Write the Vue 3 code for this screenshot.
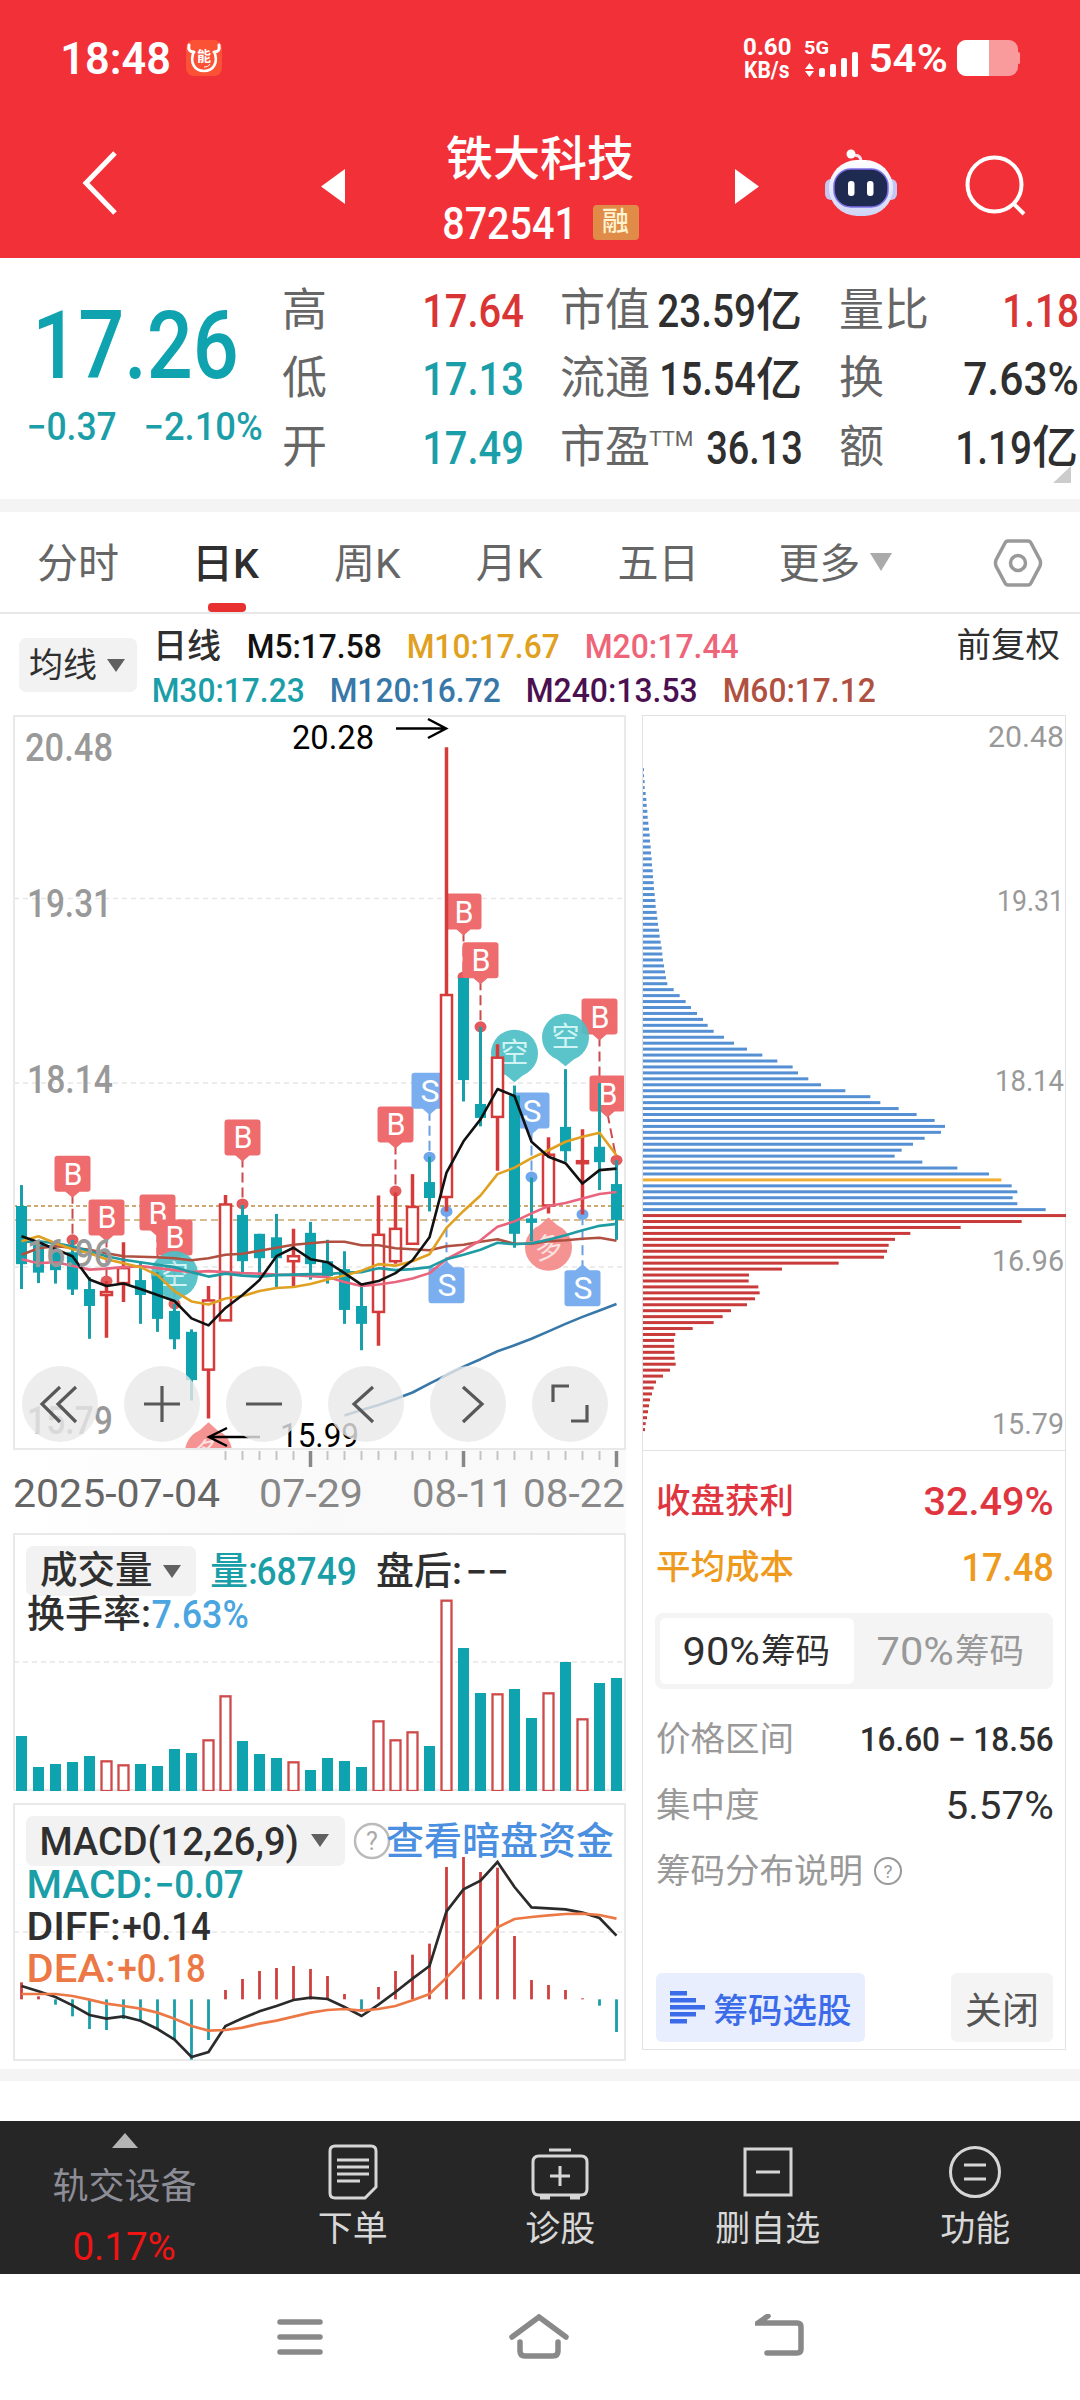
<template>
    <div class="page">
        <header class="top">
            <div class="status">
                <Num class="clock" t="18:48" :w="108" :s="44" />
                <svg class="app-badge" width="36" height="36" viewBox="0 0 36 36">
                    <rect width="36" height="36" rx="8" fill="#fb5236" />
                    <path d="M3 5c-1 5 1 7 5 7M33 5c1 5-1 7-5 7" fill="none" stroke="#fff" stroke-width="3" stroke-linecap="round" />
                    <path d="M8 11c-5 12 1 20 10 20s15-8 10-20" fill="none" stroke="#fff" stroke-width="2.6" />
                    <path d="M18 27c3 0 5-1 6-3" fill="none" stroke="#fff" stroke-width="1" />
                    <text x="18" y="21" text-anchor="middle" font-size="14" font-weight="700" fill="#fff">能</text>
                </svg>
                <div class="speed">
                    <Num t="0.60" :w="47" :s="23" />
                    <Num t="KB/s" :w="44" :s="23" />
                </div>
                <svg class="signal" width="56" height="38" viewBox="804 41 56 38" fill="#fff">
                    <text x="804" y="55" font-size="18" font-weight="700" textLength="25" lengthAdjust="spacingAndGlyphs">5G</text>
                    <path d="M805 70l4.500-6 4.500 6zM805 72l4.500 6 4.500-6z" />
                    <rect x="819" y="69" width="6" height="9" rx="2" />
                    <rect x="830" y="65" width="6" height="13" rx="2" />
                    <rect x="841" y="59" width="6" height="19" rx="2" />
                    <rect x="852" y="53" width="6" height="25" rx="2" />
                </svg>
                <Num class="power" t="54%" :w="77" :s="39" />
                <svg class="battery" width="64" height="36" viewBox="0 0 64 36">
                    <rect width="61" height="36" rx="9" fill="#f99a9d" />
                    <rect x="60" y="12" width="3" height="12" rx="1.500" fill="#f99a9d" />
                    <path d="M9 0H32V36H9a9 9 0 0 1-9-9V9a9 9 0 0 1 9-9z" fill="#fff" />
                </svg>
            </div>
            <div class="nav">
                <svg class="back" width="36" height="66" viewBox="0 0 36 66">
                    <path d="M33 3L4 33L33 63" fill="none" stroke="#fff" stroke-width="5" />
                </svg>
                <svg class="prev" width="24" height="35" viewBox="0 0 24 35"><path d="M24 0V35L0 17.500z" fill="#fff" /></svg>
                <div class="title">
                    <h1>铁大科技</h1>
                    <div class="code">
                        <Num t="872541" :w="132" :s="45" />
                        <span class="rong">融</span>
                    </div>
                </div>
                <svg class="next" width="24" height="35" viewBox="0 0 24 35"><path d="M0 0V35L24 17.500z" fill="#fff" /></svg>
                <svg class="robot" width="74" height="70" viewBox="824 149 74 70">
                    <defs>
                        <linearGradient id="shell" x1="0" y1="0" x2="0" y2="1">
                            <stop offset="0" stop-color="#fff" />
                            <stop offset="1" stop-color="#cfd4f7" />
                        </linearGradient>
                    </defs>
                    <path d="M861 162c0-6-3-7-9-7" fill="none" stroke="#f3dfee" stroke-width="3" />
                    <circle cx="851" cy="154" r="4.500" fill="#fff" />
                    <rect x="825" y="179" width="12" height="21" rx="6" fill="#c6c6f2" />
                    <rect x="885" y="179" width="12" height="21" rx="6" fill="#c6c6f2" />
                    <rect x="829" y="160" width="64" height="56" rx="28" fill="url(#shell)" />
                    <rect x="834" y="169" width="54" height="38" rx="17" fill="#1f2a50" stroke="#7d6fe8" stroke-width="1.500" />
                    <rect x="848" y="181" width="6.500" height="15" rx="3" fill="#fff" />
                    <rect x="867" y="181" width="6.500" height="15" rx="3" fill="#fff" />
                </svg>
                <svg class="search" width="62" height="62" viewBox="964 155 62 62" fill="none" stroke="#fff" stroke-width="4">
                    <circle cx="994.500" cy="184.500" r="27" />
                    <path d="M1014 204L1024 214" />
                </svg>
            </div>
        </header>

        <section class="quote">
            <div class="last">
                <Num class="price" t="17.26" :w="201" :s="94" />
                <div class="change">
                    <Num t="−0.37" :w="88" :s="38" />
                    <Num t="−2.10%" :w="117" :s="38" />
                </div>
            </div>
            <div class="facts">
                <div v-for="(f, i) in facts" :key="i" class="fact">
                    <span class="label">{{ f.label }}<sup v-if="f.sup"><Num :t="f.sup" :w="43" :s="21" /></sup></span>
                    <span class="value" :class="f.tone"><Num :t="f.value" :w="f.w" :s="46" /><b v-if="f.unit">{{ f.unit }}</b></span>
                </div>
            </div>
            <i class="corner"></i>
        </section>

        <nav class="tabs">
            <span>分时</span>
            <span class="on">日K</span>
            <span>周K</span>
            <span>月K</span>
            <span>五日</span>
            <span class="more">更多<i class="caret light"></i></span>
            <svg class="setting" width="50" height="48" viewBox="0 0 50 48" fill="none" stroke="#999" stroke-width="3.500">
                <path d="M15 2H35Q37 2 38 4L47 21Q48 24 47 27L38 44Q37 46 35 46H15Q13 46 12 44L3 27Q2 24 3 21L12 4Q13 2 15 2z" />
                <circle cx="25" cy="24" r="7.500" />
            </svg>
        </nav>

        <section class="ma">
            <div class="select ma-btn">均线<i class="caret"></i></div>
            <div class="ma-list">
                <div class="ma-row">
                    <b>日线</b>
                    <Num v-for="m in maTop" :key="m.t" :t="m.t" :w="m.w" :s="34" :style="{ color: m.c }" />
                </div>
                <div class="ma-row">
                    <Num v-for="m in maBottom" :key="m.t" :t="m.t" :w="m.w" :s="34" :style="{ color: m.c }" />
                </div>
            </div>
            <span class="adjust">前复权</span>
        </section>

        <main class="charts">
            <div class="left">
                <div class="kline">
                    <svg width="613" height="735" viewBox="13 715 613 735">
                        <g class="grid">
                            <path v-for="g in [898.5, 1083, 1267]" :key="g" :d="`M14 ${g}H625`" />
                        </g>
                        <g fill="none" stroke="#c08a45" stroke-width="1.500" stroke-dasharray="4 3">
                            <path d="M13 1206H625" />
                            <path d="M13 1220H625" stroke="#c9a66b" stroke-dasharray="7 4" />
                        </g>

                        <!-- trade flags and long/short balloons -->
                        <g v-for="(f, i) in flags" :key="'f' + i">
                            <path :d="`M${f.x} ${f.below ? y(f.top) : y(f.top) + 38}L${cx(f.i)} ${y(f.dot)}`" :stroke="flagColor[f.t].line" stroke-width="2" stroke-dasharray="10 5" />
                            <ellipse :cx="cx(f.i)" :cy="y(f.dot)" rx="6" ry="5.500" :fill="flagColor[f.t].dot" />
                            <path :d="f.below ? flagUp(f.x, y(f.top)) : flagDown(f.x, y(f.top))" :fill="flagColor[f.t].box" />
                            <text :x="f.x - 9" :y="y(f.top) + 29" font-size="31" font-weight="400" textLength="19" lengthAdjust="spacingAndGlyphs" fill="#fff">{{ f.t }}</text>
                        </g>
                        <g v-for="(b, i) in balloons" :key="'b' + i" opacity=".92">
                            <circle :cx="cx(b.i)" :cy="y(b.y)" r="23.500" :fill="b.c" />
                            <path :d="b.up ? `M${cx(b.i) - 11} ${y(b.y) - 20}L${cx(b.i)} ${y(b.y) - 30}L${cx(b.i) + 11} ${y(b.y) - 20}z` : `M${cx(b.i) - 11} ${y(b.y) + 20}L${cx(b.i)} ${y(b.y) + 29}L${cx(b.i) + 11} ${y(b.y) + 20}z`" :fill="b.c" />
                            <text :x="cx(b.i)" :y="y(b.y) + 10" text-anchor="middle" font-size="28" font-weight="400" :fill="b.up ? '#fde0e0' : '#cdf3f3'" :transform="b.up ? `rotate(-12 ${cx(b.i)} ${y(b.y)})` : null">{{ b.t }}</text>
                        </g>

                        <g v-for="(k, i) in candles" :key="'k' + i">
                            <template v-if="k[0]">
                                <path :d="`M${cx(i)} ${y(k[1])}V${y(k[2])}M${cx(i)} ${y(k[3])}V${y(k[4])}`" stroke="#d63b3b" stroke-width="3.500" />
                                <rect :x="cx(i) - 5.5" :y="y(k[2])" width="11" :height="Math.max(2, y(k[3]) - y(k[2]))" fill="#fff" stroke="#d63b3b" stroke-width="2.500" />
                            </template>
                            <template v-else>
                                <path :d="`M${cx(i)} ${y(k[1])}V${y(k[4])}`" stroke="#1a9ea8" stroke-width="3" />
                                <rect :x="cx(i) - 5.5" :y="y(k[2])" width="11" :height="y(k[3]) - y(k[2])" fill="#0ea3af" />
                            </template>
                        </g>

                        <polyline v-for="l in lines" :key="l.c" :points="trace(l.v, y, l.from)" fill="none" :stroke="l.c" stroke-width="2.600" stroke-linejoin="round" />

                        <g class="axis">
                            <text x="25" y="760.500" textLength="88" lengthAdjust="spacingAndGlyphs">20.48</text>
                            <text x="27" y="917" textLength="85" lengthAdjust="spacingAndGlyphs">19.31</text>
                            <text x="27" y="1092.500" textLength="86" lengthAdjust="spacingAndGlyphs">18.14</text>
                            <text x="27" y="1267" textLength="86" lengthAdjust="spacingAndGlyphs">16.96</text>
                            <text x="27" y="1434" textLength="86" lengthAdjust="spacingAndGlyphs">15.79</text>
                        </g>
                        <g font-size="34" font-weight="400" fill="#000">
                            <text x="292" y="748.500" textLength="82" lengthAdjust="spacingAndGlyphs">20.28</text>
                            <text x="280" y="1447" textLength="79" lengthAdjust="spacingAndGlyphs">15.99</text>
                        </g>
                        <path d="M396 728.500H446M428 719L446 728.500L428 738M260 1437H209M227 1428L209 1437L227 1446" fill="none" stroke="#000" stroke-width="2.500" />
                        <rect x="14" y="716" width="611" height="733" fill="none" stroke="#e9e9e9" stroke-width="2" />
                    </svg>
                    <div class="tools">
                        <svg v-for="d in tools" :key="d" viewBox="0 0 76 76">
                            <path :d="d" fill="none" stroke="#585858" stroke-width="3.200" />
                        </svg>
                    </div>
                </div>

                <svg class="dates" width="613" height="83" viewBox="13 1450 613 83">
                    <path v-for="i in 24" :key="i" :d="`M${cx(i + 11)} 1451V${tickEnd(i + 11)}`" :stroke="tickEnd(i + 11) > 1461 ? '#888' : '#c4c4c4'" :stroke-width="tickEnd(i + 11) > 1461 ? 3.5 : 2" />
                    <g font-size="38" font-weight="400">
                        <text x="13" y="1507" fill="#666" textLength="207" lengthAdjust="spacingAndGlyphs">2025-07-04</text>
                        <text x="259" y="1507" fill="#888" textLength="104" lengthAdjust="spacingAndGlyphs">07-29</text>
                        <text x="412" y="1507" fill="#888" textLength="101" lengthAdjust="spacingAndGlyphs">08-11</text>
                        <text x="523" y="1507" fill="#888" textLength="102" lengthAdjust="spacingAndGlyphs">08-22</text>
                    </g>
                </svg>

                <div class="sub volume">
                    <svg width="613" height="258" viewBox="13 1533 613 258">
                        <rect x="14" y="1534" width="611" height="256" fill="none" stroke="#e9e9e9" stroke-width="2" />
                        <path class="dash" d="M14 1662H625" />
                        <template v-for="(v, i) in volumes" :key="i">
                            <rect v-if="candles[i][0]" :x="cx(i) - 5" :y="vy(v) + 1" width="10" :height="vy(1053) - vy(v) - 1" fill="#fff" stroke="#cf4a4a" stroke-width="2.300" />
                            <rect v-else :x="cx(i) - 5.5" :y="vy(v)" width="11" :height="vy(1053) - vy(v)" fill="#0ea3af" />
                        </template>
                    </svg>
                    <div class="legend">
                        <div class="legend-row">
                            <div class="select vol-btn">成交量<i class="caret"></i></div>
                            <span class="teal">量:</span><Num class="teal" t="68749" :w="98" :s="38" />
                            <span class="after">盘后:</span><Num class="dashes" t="−−" :w="41" :s="38" />
                        </div>
                        <div class="legend-row turnover"><span>换手率:</span><Num class="sky" t="7.63%" :w="95" :s="38" /></div>
                    </div>
                </div>

                <div class="sub macd">
                    <svg width="613" height="258" viewBox="13 1803 613 258">
                        <rect x="14" y="1804" width="611" height="256" fill="none" stroke="#e9e9e9" stroke-width="2" />
                        <path class="dash" d="M14 1932H625" />
                        <path v-for="(v, i) in macdBars" :key="i" :d="`M${cx(i)} ${my(628)}V${my(v)}`" :stroke="v < 628 ? '#cf3f3f' : '#1a9ea8'" stroke-width="2.800" />
                        <polyline :points="trace(diff, my)" fill="none" stroke="#2b2b2b" stroke-width="2.700" />
                        <polyline :points="trace(dea, my)" fill="none" stroke="#ec7846" stroke-width="2.700" />
                    </svg>
                    <div class="legend">
                        <div class="legend-row macd-head">
                            <div class="select macd-btn"><Num t="MACD(12,26,9)" :w="257" :s="39" /><i class="caret"></i></div>
                            <svg class="help" width="38" height="38" viewBox="0 0 38 38">
                                <circle cx="19" cy="19" r="17" fill="none" stroke="#bbb" stroke-width="2.500" />
                                <text x="19" y="28" text-anchor="middle" font-size="25" font-weight="400" fill="#aaa">?</text>
                            </svg>
                            <a>查看暗盘资金</a>
                        </div>
                        <div class="metric teal"><Num t="MACD:" :w="124" :s="39" /><Num t="−0.07" :w="87" :s="38" /></div>
                        <div class="metric"><Num t="DIFF:" :w="92" :s="39" /><Num t="+0.14" :w="86" :s="38" /></div>
                        <div class="metric orange"><Num t="DEA:" :w="87" :s="39" /><Num t="+0.18" :w="86" :s="38" /></div>
                    </div>
                </div>
            </div>

            <aside class="chips">
                <svg width="423" height="734" viewBox="643 716 423 734">
                    <rect v-for="(c, i) in chips" :key="i" x="643" :y="768.2 + i * 5.945" :width="(c - 69) / 3" height="3" :fill="i === 69 ? '#f0ae35' : i > 74 ? '#c93b3b' : '#5590d4'" />
                    <g font-size="30" fill="#999" font-weight="400">
                        <text x="988" y="747" textLength="76" lengthAdjust="spacingAndGlyphs">20.48</text>
                        <text x="997" y="910.500" textLength="67" lengthAdjust="spacingAndGlyphs">19.31</text>
                        <text x="995" y="1090.500" textLength="69" lengthAdjust="spacingAndGlyphs">18.14</text>
                        <text x="992" y="1271" textLength="72" lengthAdjust="spacingAndGlyphs">16.96</text>
                        <text x="992" y="1434" textLength="72" lengthAdjust="spacingAndGlyphs">15.79</text>
                    </g>
                </svg>
                <div class="stats">
                    <div class="stat red"><span>收盘获利</span><Num t="32.49%" :w="128" :s="38" /></div>
                    <div class="stat gold"><span>平均成本</span><Num t="17.48" :w="90" :s="38" /></div>
                    <div class="segment">
                        <span class="active"><Num t="90%" :w="75" :s="38" />筹码</span>
                        <span><Num t="70%" :w="75" :s="38" />筹码</span>
                    </div>
                    <div class="stat range"><span>价格区间</span><Num t="16.60 − 18.56" :w="192" :s="34" /></div>
                    <div class="stat"><span>集中度</span><Num t="5.57%" :w="106" :s="38" /></div>
                    <div class="stat note">
                        <span>筹码分布说明</span>
                        <svg width="30" height="30" viewBox="0 0 30 30">
                            <circle cx="15" cy="15" r="13" fill="none" stroke="#999" stroke-width="2" />
                            <text x="15" y="22" text-anchor="middle" font-size="19" fill="#999">?</text>
                        </svg>
                    </div>
                    <div class="actions">
                        <button class="pick">
                            <svg width="35" height="33" viewBox="0 0 35 33" fill="#3b6be8">
                                <path d="M0 0H17V4.500H0zM0 7H26V11.500H0zM0 14H35V18.500H0zM0 21H26V25.500H0zM0 28H17V32.500H0z" />
                            </svg>
                            筹码选股
                        </button>
                        <button class="close">关闭</button>
                    </div>
                </div>
            </aside>
        </main>

        <div class="divider"></div>

        <footer class="bar">
            <div class="sector">
                <i class="up"></i>
                <span>轨交设备</span>
                <Num t="0.17%" :w="101" :s="39" />
            </div>
            <div v-for="a in actions" :key="a.name" class="action">
                <svg width="60" height="58" viewBox="-30 -29 60 58" fill="none" stroke="#d6d6d6" stroke-width="3">
                    <path :d="a.d" />
                </svg>
                <span>{{ a.name }}</span>
            </div>
        </footer>

        <div class="system">
            <svg width="46" height="46" viewBox="0 0 46 46"><path d="M3 8H43M3 23H43M3 38H43" /></svg>
            <svg width="60" height="46" viewBox="0 0 60 46"><path d="M3 23L30 3L57 23M11 28V37Q11 42 16 42H44Q49 42 49 37V28" /></svg>
            <svg width="50" height="46" viewBox="0 0 50 46"><path d="M13 2L3 9H42Q46 9 46 13V35Q46 39 42 39H12" /></svg>
        </div>
    </div>
</template>

<script setup>
import { h } from 'vue';

// condensed figures: the text is fitted to a fixed width, box height equals cap height
const Num = (props) => h('svg', {
    width: props.w,
    height: Math.round(props.s * 0.711),
    style: { overflow: 'visible', flex: 'none', display: 'block' },
    fill: 'currentColor',
}, [
    h('text', {
        x: -props.s * 0.04,
        y: Math.round(props.s * 0.711),
        'font-size': props.s,
        textLength: props.w + props.s * 0.06,
        lengthAdjust: 'spacingAndGlyphs',
    }, props.t),
]);
Num.props = ['t', 'w', 's'];

const facts = [
    { label: '高', value: '17.64', w: 99, tone: 'red' },
    { label: '市值', value: '23.59', w: 96, unit: '亿' },
    { label: '量比', value: '1.18', w: 74, tone: 'red' },
    { label: '低', value: '17.13', w: 99, tone: 'teal' },
    { label: '流通', value: '15.54', w: 94, unit: '亿' },
    { label: '换', value: '7.63%', w: 113 },
    { label: '开', value: '17.49', w: 99, tone: 'teal' },
    { label: '市盈', sup: 'TTM', value: '36.13', w: 94 },
    { label: '额', value: '1.19', w: 74, unit: '亿' },
];

const maTop = [
    { t: 'M5:17.58', w: 133, c: '#111' },
    { t: 'M10:17.67', w: 151, c: '#e0a020' },
    { t: 'M20:17.44', w: 152, c: '#ee6478' },
];
const maBottom = [
    { t: 'M30:17.23', w: 151, c: '#1a9ea8' },
    { t: 'M120:16.72', w: 169, c: '#3878a8' },
    { t: 'M240:13.53', w: 170, c: '#4a1050' },
    { t: 'M60:17.12', w: 151, c: '#b05040' },
];

// [rising, high, body top, body bottom, low]
const candles = [
    [0, 975, 1017, 1134, 1184], [0, 1090, 1095, 1151, 1172], [0, 1100, 1108, 1146, 1173], [0, 1085, 1110, 1185, 1196],
    [0, 1160, 1184, 1218, 1284], [1, 1168, 1190, 1196, 1282], [1, 1090, 1142, 1172, 1210], [0, 1130, 1166, 1196, 1254],
    [0, 1150, 1158, 1244, 1270], [0, 1214, 1228, 1285, 1305], [0, 1265, 1270, 1367, 1408], [1, 1178, 1207, 1346, 1444],
    [1, 995, 1014, 1247, 1247], [0, 1015, 1035, 1128, 1152], [0, 1073, 1073, 1122, 1160], [0, 1033, 1080, 1122, 1180],
    [1, 1063, 1118, 1128, 1178], [0, 1049, 1071, 1134, 1165], [0, 1085, 1128, 1158, 1173], [0, 1108, 1144, 1226, 1254],
    [0, 1172, 1218, 1254, 1307], [1, 996, 1075, 1230, 1298], [1, 990, 1063, 1128, 1133], [1, 953, 1019, 1093, 1093],
    [0, 918, 969, 1001, 1028], [1, 95, 593, 999, 1028], [0, 559, 559, 764, 807], [0, 657, 812, 840, 857],
    [1, 692, 719, 838, 946], [0, 775, 795, 1073, 1101], [0, 960, 1042, 1051, 1088], [1, 879, 914, 1016, 1032],
    [0, 742, 858, 907, 928], [1, 863, 927, 931, 1034], [0, 770, 898, 929, 985], [0, 925, 973, 1045, 1085],
];

const lines = [
    { c: '#b05040', v: [1115, 1102, 1098, 1101, 1105, 1112, 1118, 1119, 1120, 1122, 1126, 1122, 1115, 1113, 1107, 1101, 1095, 1092, 1089, 1089, 1096, 1096, 1102, 1104, 1106, 1098, 1095, 1089, 1084, 1093, 1093, 1088, 1086, 1083, 1081, 1087] },
    { c: '#e8657d', v: [1124, 1132, 1130, 1137, 1145, 1143, 1140, 1138, 1142, 1146, 1150, 1148, 1150, 1152, 1153, 1155, 1156, 1158, 1160, 1170, 1178, 1175, 1170, 1163, 1152, 1124, 1106, 1086, 1059, 1048, 1032, 1017, 1011, 1002, 993, 989] },
    { c: '#1f9ba3', v: [1090, 1088, 1092, 1098, 1108, 1118, 1125, 1130, 1135, 1140, 1150, 1159, 1153, 1157, 1159, 1156, 1155, 1154, 1154, 1151, 1150, 1142, 1146, 1144, 1140, 1124, 1115, 1105, 1091, 1094, 1092, 1085, 1076, 1066, 1057, 1053] },
    { c: '#3878a8', from: 19, v: [1438, 1427, 1417, 1405, 1392, 1374, 1357, 1340, 1325, 1309, 1297, 1284, 1269, 1254, 1240, 1227, 1214] },
    { c: '#e0a020', v: [1088, 1078, 1092, 1104, 1112, 1124, 1132, 1140, 1156, 1188, 1209, 1215, 1203, 1198, 1188, 1182, 1180, 1174, 1165, 1157, 1147, 1134, 1137, 1128, 1114, 1061, 1027, 996, 953, 940, 921, 905, 888, 878, 870, 915] },
    { c: '#111', v: [1078, 1090, 1104, 1118, 1165, 1178, 1173, 1184, 1196, 1208, 1243, 1257, 1222, 1196, 1166, 1118, 1101, 1124, 1130, 1152, 1175, 1168, 1152, 1126, 1080, 950, 887, 843, 782, 796, 888, 918, 931, 972, 945, 942] },
];

const cx = (i) => 21.5 + i * 17;
const y = (v) => 700 + v * 0.4975;
const vy = (v) => 1440 + v / 3;
const my = (v) => 1790 + v / 3;
const trace = (values, scale, from = 0) => values.map((v, i) => `${cx(i + from)},${scale(v)}`).join(' ');
const tickEnd = (i) => ((i - 17) % 9 === 0 ? 1467 : 1460);

const flagColor = {
    B: { box: '#ee6c6e', dot: '#e25a5c', line: '#cc4a4c' },
    S: { box: '#7aaeee', dot: '#6fa6ec', line: '#6b9fe0' },
};
const flags = [
    { t: 'B', i: 3, x: 72.5, top: 916, dot: 1085 },
    { t: 'B', i: 5, x: 106.5, top: 1004, dot: 1168 },
    { t: 'B', i: 8, x: 157.5, top: 994, dot: 1160 },
    { t: 'B', i: 9, x: 174.5, top: 1044, dot: 1214 },
    { t: 'B', i: 13, x: 242.5, top: 843, dot: 1013 },
    { t: 'B', i: 22, x: 395.5, top: 817, dot: 987 },
    { t: 'S', i: 24, x: 429.5, top: 749, dot: 919 },
    { t: 'S', i: 25, x: 446.5, top: 1140, dot: 1028, below: true },
    { t: 'B', i: 26, x: 463.5, top: 389, dot: 557 },
    { t: 'B', i: 27, x: 480.5, top: 487, dot: 657 },
    { t: 'S', i: 30, x: 531.5, top: 789, dot: 959 },
    { t: 'S', i: 33, x: 582.5, top: 1146, dot: 1034, below: true },
    { t: 'B', i: 34, x: 599.5, top: 600, dot: 770 },
    { t: 'B', i: 35, x: 607.5, top: 755, dot: 925 },
];
const flagBox = (x, t) => `M${x - 15} ${t}H${x + 15}Q${x + 18} ${t} ${x + 18} ${t + 3}V${t + 33}Q${x + 18} ${t + 36} ${x + 15} ${t + 36}H${x - 15}Q${x - 18} ${t + 36} ${x - 18} ${t + 33}V${t + 3}Q${x - 18} ${t} ${x - 15} ${t}z`;
const flagDown = (x, t) => `${flagBox(x, t)}M${x - 7} ${t + 36}H${x + 7}L${x} ${t + 42}z`;
const flagUp = (x, t) => `${flagBox(x, t)}M${x - 7} ${t}H${x + 7}L${x} ${t - 6}z`;

const balloons = [
    { t: '空', i: 9, y: 1155, c: '#4ec0c6' },
    { t: '多', i: 11, y: 1512, c: '#f58a8a', up: true },
    { t: '空', i: 29, y: 710, c: '#4ec0c6' },
    { t: '多', i: 31, y: 1100, c: '#f58a8a', up: true },
    { t: '空', i: 32, y: 678, c: '#4ec0c6' },
];

const tools = [
    'M38 21L20 38L38 56M54 21L36 38L54 56',
    'M20 38H56M38 20V56',
    'M20 38H56',
    'M45 21L26 38L45 56',
    'M33 21L52 38L33 56',
    'M21 36V20H37M39 55H55V39',
];

const volumes = [
    888, 981, 972, 966, 948, 961, 973, 972, 978, 927, 939, 898, 766, 903, 942, 954, 964, 990,
    954, 963, 981, 841, 898, 874, 918, 479, 624, 759, 760, 747, 834, 757, 666, 835, 729, 714,
];
const macdBars = [
    577, 619, 644, 679, 717, 720, 687, 690, 717, 750, 809, 750, 600, 567, 543, 534, 528, 537,
    558, 612, 662, 591, 543, 494, 461, 231, 201, 246, 233, 438, 570, 585, 600, 625, 647, 726,
];
const diff = [
    588, 604, 621, 646, 675, 686, 679, 692, 717, 749, 801, 786, 708, 685, 664, 648, 630, 623,
    627, 651, 678, 644, 606, 566, 528, 364, 298, 272, 216, 291, 352, 355, 358, 368, 384, 437,
];
const dea = [
    612, 612, 612, 618, 629, 641, 648, 656, 668, 686, 708, 722, 720, 713, 701, 692, 680, 668,
    660, 657, 662, 657, 648, 631, 612, 563, 510, 464, 412, 387, 381, 376, 372, 371, 375, 386,
];

const chips = [
    72, 72, 74, 74, 77, 79, 80, 82, 83, 85, 87, 89, 90, 92, 93, 95, 96, 98, 99, 101,
    102, 104, 106, 107, 110, 112, 114, 117, 119, 122, 125, 127, 129, 132, 135, 138, 142, 161, 179, 197,
    213, 231, 249, 263, 281, 312, 342, 381, 427, 472, 518, 534, 565, 603, 676, 751, 781, 836, 890, 944,
    975, 963, 914, 879, 845, 824, 907, 1012, 1107, 1144, 1175, 1192, 1178, 1192, 1277,
    1340, 1205, 1022, 871, 825, 806, 801, 792, 656, 486, 387, 386, 415, 419, 405, 381, 333, 308, 281, 218,
    166, 162, 163, 163, 164, 167, 150, 129, 108, 101, 96, 90, 87, 84, 81, 77, 75,
];

const actions = [
    { name: '下单', d: 'M-18 -26H18Q23 -26 23 -21V15L12 26H-18Q-23 26 -23 21V-21Q-23 -26 -18 -26zM-16 -12H16M-16 -5H16M-16 2H16M-16 9H7' },
    { name: '诊股', d: 'M-21 -16H21Q27 -16 27 -10V17Q27 23 21 23H-21Q-27 23 -27 17V-10Q-27 -16 -21 -16zM-11 -22H11M-20 26H-10M10 26H20M-10 4H10M0 -6V14' },
    { name: '删自选', d: 'M-23 -23H23V23H-23zM-12 0H12' },
    { name: '功能', d: 'M24.500 0A24.500 24.500 0 1 1 -24.500 0A24.500 24.500 0 1 1 24.500 0zM-11 -7H11M-11 7H11' },
];
</script>

<style>
body {
    background: #fff;
}
</style>

<style scoped>
.page {
    width: 1080px;
    height: 2400px;
    overflow: hidden;
    font-family: Roboto, "Noto Sans CJK SC", sans-serif;
    font-weight: 500;
    line-height: 1;
    color: #2f2f2f;
    white-space: nowrap;
}

.page svg {
    display: block;
    flex: none;
}

.top {
    height: 258px;
    background: #f23037;
    color: #fff;
}

.status {
    display: flex;
    align-items: center;
    height: 116px;
    padding-left: 62px;
    box-sizing: border-box;
}

.clock,
.power {
    font-weight: 600;
}

.app-badge {
    margin-left: 16px;
}

.speed {
    width: 48px;
    margin-left: 521px;
    display: flex;
    flex-direction: column;
    align-items: center;
    gap: 7px;
    font-weight: 700;
}

.signal {
    margin: 2px 10px 0 13px;
}

.battery {
    margin-left: 10px;
}

.nav {
    display: flex;
    height: 142px;
    align-items: flex-start;
}

.back {
    margin: 34px 0 0 82px;
}

.prev {
    margin: 53px 0 0 203px;
}

.title {
    width: 390px;
    display: flex;
    flex-direction: column;
    align-items: center;
    margin-top: 19px;
}

h1 {
    margin: 0;
    font-size: 47px;
    font-weight: 500;
}

.code {
    display: flex;
    align-items: center;
    gap: 17px;
    margin-top: 23px;
    padding-left: 2px;
}

.rong {
    width: 46px;
    height: 35px;
    border-radius: 4px;
    background: #e18b48;
    color: #fff3cf;
    font-size: 27px;
    line-height: 35px;
    text-align: center;
}

.next {
    margin-top: 53px;
}

.robot {
    margin: 33px 0 0 65px;
}

.search {
    margin: 39px 0 0 66px;
}

.quote {
    position: relative;
    display: flex;
    height: 241px;
    border-bottom: 13px solid #f4f4f4;
}

.last {
    width: 282px;
    color: #0fa2af;
}

.price {
    margin: 53px 0 35px 36px;
}

.change {
    display: flex;
    gap: 29px;
    padding-left: 28px;
    color: #1a9ea8;
}

.facts {
    display: grid;
    grid-template-columns: 241px 242px 239px;
    grid-template-rows: repeat(3, 68.5px);
    column-gap: 37px;
    padding-top: 18px;
}

.fact {
    display: flex;
    justify-content: space-between;
    align-items: center;
}

.label {
    display: flex;
    color: #666;
    font-size: 45px;
    font-weight: 400;
}

.label sup {
    margin-top: 6px;
}

.value {
    display: flex;
    align-items: center;
}

.value b {
    margin-left: 1px;
    font-size: 46px;
    font-weight: 500;
}

.corner {
    position: absolute;
    right: 9px;
    bottom: 16px;
    border-left: 18px solid transparent;
    border-bottom: 17px solid #ccc;
}

.red {
    color: #d93535;
}

.teal {
    color: #1a9ea8;
}

.sky {
    color: #4aa5e0;
}

.tabs {
    display: flex;
    align-items: center;
    height: 102px;
    box-sizing: border-box;
    border-bottom: 2px solid #e8e8e8;
    padding: 5px 0 0 37px;
    color: #666;
    font-size: 41px;
    font-weight: 400;
}

.tabs span {
    position: relative;
}

.tabs span + span {
    margin-left: 75px;
}

.tabs span.on {
    margin-left: 73px;
    color: #2f2f2f;
    font-weight: 500;
}

.tabs .on::after {
    content: "";
    position: absolute;
    left: 16px;
    top: 59px;
    width: 38px;
    height: 9px;
    border-radius: 4px;
    background: #e93030;
}

.tabs span.more {
    display: flex;
    align-items: center;
    margin-left: 79px;
}

.setting {
    margin: -3px 0 0 101px;
}

.caret {
    display: inline-block;
    border: 9px solid transparent;
    border-top: 13px solid #606060;
    border-bottom: 0;
    margin-left: 10px;
}

.caret.light {
    border-width: 18px 11px 0;
    border-top-color: #aaa;
    margin-top: -6px;
}

.select {
    display: flex;
    align-items: center;
    box-sizing: border-box;
    border-radius: 7px;
    background: #f2f2f2;
}

.ma {
    display: flex;
    align-items: flex-start;
    height: 101px;
    padding: 0 20px 0 19px;
}

.ma-btn {
    width: 118px;
    height: 54px;
    margin-top: 24px;
    padding-left: 10px;
    font-size: 34px;
    font-weight: 400;
}

.ma-list {
    margin: 10px 0 0 16px;
}

.ma-row {
    display: flex;
    align-items: center;
    gap: 27px;
    height: 44px;
}

.ma-row b {
    font-size: 34px;
    font-weight: 500;
}

.adjust {
    margin: 14px 0 0 auto;
    font-size: 34.5px;
    font-weight: 400;
}

.charts {
    display: flex;
    gap: 16px;
    padding-left: 13px;
}

.left {
    width: 613px;
}

.kline {
    position: relative;
}

.grid path,
.dash {
    stroke: #e6e6e6;
    stroke-width: 1.5;
    stroke-dasharray: 5 4;
}

.axis {
    fill: #999;
    font-size: 38px;
}

.tools {
    position: absolute;
    left: 9px;
    bottom: 8px;
    display: flex;
    gap: 26px;
}

.tools svg {
    width: 76px;
    height: 76px;
    border-radius: 50%;
    background: rgba(233, 233, 233, 0.8);
}

.dates {
    background: linear-gradient(90deg, #fff, #f9f9f9 50%, #fafafa);
}

.sub {
    position: relative;
    height: 258px;
}

.macd {
    margin-top: 12px;
}

.legend {
    position: absolute;
    left: 13px;
    top: 13px;
    font-size: 38px;
}

.legend-row {
    display: flex;
    align-items: center;
    height: 50px;
}

.macd-head {
    height: 49px;
    margin-bottom: -2px;
}

.vol-btn {
    width: 170px;
    height: 50px;
    padding-left: 14px;
    margin-right: 14px;
    font-size: 37.5px;
}

.after {
    margin-left: 20px;
}

.dashes {
    margin-left: 5px;
}

.turnover {
    height: 36px;
    padding-left: 1px;
    gap: 2px;
}

.macd-btn {
    width: 319px;
    height: 50px;
    padding-left: 15px;
}

.macd-btn .caret {
    margin-left: 13px;
}

.help {
    margin-left: 8px;
}

.legend a {
    margin-left: -5px;
    color: #4a8fe0;
}

.metric {
    display: flex;
    align-items: center;
    gap: 4px;
    height: 42px;
    padding-left: 2px;
}

.orange {
    color: #ec7846;
}

.chips {
    width: 424px;
    height: 1335px;
    box-sizing: border-box;
    border: 1.5px solid #e2e2e2;
}

.stats {
    height: 597px;
    box-sizing: border-box;
    border-top: 1.5px solid #e2e2e2;
    padding: 17px 12px 0 13px;
    font-size: 34.5px;
    font-weight: 400;
}

.stat {
    display: flex;
    align-items: center;
    justify-content: space-between;
    height: 66px;
}

.stat span {
    color: #999;
}

.stat.range {
    font-weight: 500;
}

.stat.range span {
    font-weight: 400;
}

.stat.red,
.stat.red span {
    color: #e0343f;
    font-weight: 500;
}

.stat.gold,
.stat.gold span {
    color: #ee9a1c;
    font-weight: 500;
}

.segment {
    display: flex;
    height: 76px;
    box-sizing: border-box;
    margin: 13px 0 17px -1px;
    padding: 5px;
    border-radius: 8px;
    background: #f4f4f4;
    color: #999;
}

.segment span {
    display: flex;
    align-items: center;
    justify-content: center;
    gap: 2px;
    width: 194px;
    border-radius: 6px;
}

.segment .active {
    background: #fff;
    color: #2f2f2f;
}

.stat.note {
    justify-content: flex-start;
    gap: 10px;
}

.actions {
    display: flex;
    justify-content: space-between;
    margin-top: 69px;
}

button {
    display: flex;
    align-items: center;
    justify-content: center;
    height: 69px;
    padding: 0;
    border: none;
    border-radius: 6px;
    font-family: inherit;
}

.pick {
    gap: 9px;
    width: 209px;
    background: #e8eefe;
    color: #3b6be8;
    font-size: 34.5px;
    font-weight: 500;
}

.close {
    width: 102px;
    background: #f4f4f4;
    color: #555;
    font-size: 37px;
}

.divider {
    height: 12px;
    margin: 8px 0 40px;
    background: #f4f4f4;
}

.bar {
    display: flex;
    height: 153px;
    background: #262626;
    color: #d8d8d8;
    font-size: 35px;
    font-weight: 400;
}

.sector {
    display: flex;
    flex-direction: column;
    align-items: center;
    width: 249px;
    color: #f01414;
}

.up {
    margin-top: 12px;
    border: 13px solid transparent;
    border-top: 0;
    border-bottom: 15px solid #b5b5b5;
}

.sector span {
    margin: 21px 0 27px;
    font-size: 36px;
    color: #8d8d97;
}

.action {
    display: flex;
    flex-direction: column;
    align-items: center;
    gap: 11px;
    width: 207.5px;
    padding-top: 22px;
}

.system {
    display: flex;
    align-items: center;
    height: 126px;
    padding: 0 275px 0 277px;
    justify-content: space-between;
}

.system path {
    fill: none;
    stroke: #898989;
    stroke-width: 5.500;
    stroke-linecap: round;
}
</style>
